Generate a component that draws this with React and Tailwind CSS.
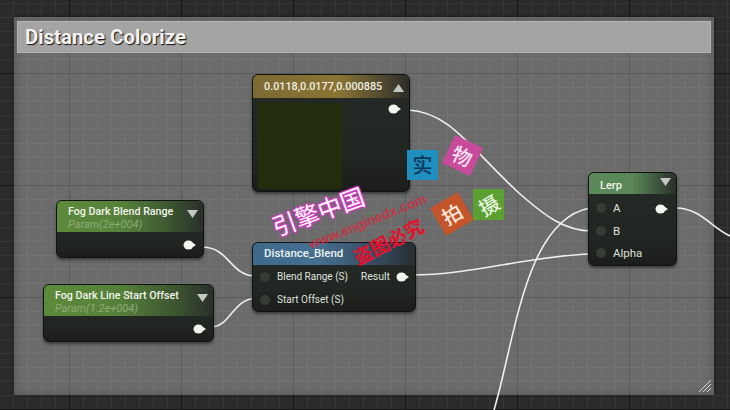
import React from 'react';

const Pin = ({ on }) => (
  <svg width="14" height="12" viewBox="0 0 14 12" className="shrink-0">
    {on ? (
      <>
        <ellipse cx="5.5" cy="6" rx="5" ry="4.5" fill="#f2f4ee" />
        <path d="M10 4 L13 6 L10 8 Z" fill="#f2f4ee" />
      </>
    ) : (
      <circle cx="6" cy="6" r="5" fill="#363b35" />
    )}
  </svg>
);

const Tri = ({ up }) => (
  <svg width="11" height="8" viewBox="0 0 11 8" className="shrink-0">
    <path d={up ? 'M5.5 0 L11 8 L0 8 Z' : 'M0 0 L11 0 L5.5 8 Z'} fill="#c4c8c2" />
  </svg>
);

const nodeBody =
  'absolute rounded-[6px] border border-[#101210] bg-[linear-gradient(180deg,#262a26,#222622_70%,#1b1d1b)] shadow-[0_2px_3px_rgba(0,0,0,0.45)] overflow-hidden';

const InputRow = ({ label, size }) => (
  <div className={`flex items-center gap-[4px] leading-[14px] text-[#dfe1db] ${size}`}>
    <Pin />
    <span>{label}</span>
  </div>
);

const ParamNode = ({ pos, title, sub }) => (
  <div className={`${nodeBody} ${pos}`}>
    <div className="flex h-[31px] items-start justify-between bg-[linear-gradient(90deg,#5d8a3a,#55803a_45%,#3a5230_80%,#2a2e2a)] pl-[11px] pr-[5px] pt-[4px]">
      <div>
        <div className="text-[10.7px] font-medium leading-[14px] text-[#f1f3ec]">{title}</div>
        <div className="text-[11px] italic leading-[12px] text-[#8fa878]">{sub}</div>
      </div>
      <div className="pt-[5px]"><Tri /></div>
    </div>
    <div className="flex justify-end pr-[6px] pt-[7px]"><Pin on /></div>
  </div>
);

const Wires = () => (
  <svg width="730" height="410" viewBox="0 0 730 410" fill="none" className="absolute left-0 top-0" stroke="#eef0ea" strokeWidth="1.6">
    <path d="M408 110 C 450 112, 470 148, 520 194 C 545 216, 565 231, 592 231" />
    <path d="M203 247 C 230 248, 230 276, 256 276" />
    <path d="M213 327 C 232 324, 232 300, 256 298" />
    <path d="M412 275 C 470 275, 530 256, 590 254" />
    <path d="M676 208 C 700 208, 712 228, 730 236" />
    <path d="M494 410 C 515 340, 525 220, 590 208" />
  </svg>
);

const Stamp = ({ pos, bg, text, label }) => (
  <div className={`absolute flex items-center justify-center font-['Noto_Sans_CJK_SC',sans-serif] text-[20px] font-medium ${pos} ${bg} ${text}`}>{label}</div>
);

export default function App() {
  return (
    <div
      className="relative h-[410px] w-[730px] overflow-hidden bg-[#2b2b2b] bg-[linear-gradient(#161616_1px,transparent_1px),linear-gradient(90deg,#161616_1px,transparent_1px),linear-gradient(#363636_1px,transparent_1px),linear-gradient(90deg,#363636_1px,transparent_1px)] bg-[size:112px_112px,112px_112px,14px_14px,14px_14px] bg-[position:0_73px,69px_0,0_3px,13px_0] font-['Roboto',sans-serif]"
    >
      {/* comment box */}
      <div className="absolute left-[14px] top-[17px] h-[378px] w-[700px] bg-white/30 shadow-[inset_0_0_10px_rgba(0,0,0,0.22),0_0_3px_rgba(0,0,0,0.5)]">
        <div className="mx-[3px] mt-[4px] flex h-[32px] items-center border border-[#b4b4b4] bg-[#a4a4a4] pl-[7px] text-[20.4px] font-bold text-[#f2f2f2] [text-shadow:1px_1px_1px_#111]">
          Distance Colorize
        </div>
        <svg width="14" height="14" viewBox="0 0 14 14" className="absolute bottom-[2px] right-[2px]" stroke="#d8d8d8" strokeWidth="1">
          <path d="M1 13 L13 1 M5 13 L13 5 M9 13 L13 9" />
        </svg>
      </div>

      <Wires />

      {/* constant node */}
      <div className={`${nodeBody} left-[252px] top-[74px] h-[118px] w-[158px]`}>
        <div className="flex h-[23px] items-center justify-between bg-[linear-gradient(90deg,#7d6a32,#8a7434_55%,#4c4630_85%,#2c2c28)] pl-[11px] pr-[5px] pt-[2px] text-[10.8px] font-medium text-[#f1f1e8]">
          <span>0.0118,0.0177,0.000885</span>
          <Tri up />
        </div>
        <div className="flex justify-between pl-[5px] pr-[7px] pt-[5px]">
          <div className="h-[86px] w-[84px] bg-[#242c0e]" />
          <Pin on />
        </div>
      </div>

      <ParamNode pos="left-[56px] top-[200px] h-[58px] w-[148px]" title="Fog Dark Blend Range" sub="Param(2e+004)" />
      <ParamNode pos="left-[43px] top-[284px] h-[58px] w-[171px]" title="Fog Dark Line Start Offset" sub="Param(1.2e+004)" />

      {/* function node */}
      <div className={`${nodeBody} left-[252px] top-[242px] h-[70px] w-[164px]`}>
        <div className="flex h-[22px] items-center bg-[linear-gradient(90deg,#3f6a8c,#456f90_40%,#34475a_80%,#2a2e30)] pl-[11px] text-[11.5px] font-medium text-[#eef2f4]">
          Distance_Blend
        </div>
        <div className="flex justify-between pl-[6px] pr-[5px] pt-[5px]">
          <div className="flex flex-col gap-[9px]">
            <InputRow label="Blend Range (S)" size="text-[10px]" />
            <InputRow label="Start Offset (S)" size="text-[10px]" />
          </div>
          <div className="flex h-[14px] items-center gap-[6px] text-[10.5px] text-[#dfe1db]">
            <span>Result</span>
            <Pin on />
          </div>
        </div>
      </div>

      {/* lerp node */}
      <div className={`${nodeBody} left-[588px] top-[172px] h-[94px] w-[89px]`}>
        <div className="flex h-[21px] items-start justify-between bg-[linear-gradient(90deg,#5d8a5c,#5a8658_50%,#384a38_85%,#2a2e2a)] pl-[11px] pr-[5px] pt-[5px] text-[11px] font-medium leading-[14px] text-[#f1f3ec]">
          <span className="mt-[1px]">Lerp</span>
          <Tri />
        </div>
        <div className="flex justify-between pl-[6px] pr-[7px] pt-[7px]">
          <div className="flex flex-col gap-[8.5px]">
            <InputRow label="A" size="text-[11.5px]" />
            <InputRow label="B" size="text-[11.5px]" />
            <InputRow label="Alpha" size="text-[11.5px]" />
          </div>
          <div className="pt-[2px]"><Pin on /></div>
        </div>
      </div>

      {/* watermark */}
      <div className="absolute left-[270px] top-[196px] -rotate-[20deg] whitespace-nowrap font-['Noto_Sans_CJK_SC',sans-serif] text-[24px] font-normal leading-[30px] text-white [text-shadow:0_0_2px_#d83cc8,1px_1px_1px_#d83cc8,-1px_-1px_1px_#d83cc8,1px_-1px_1px_#d83cc8,-1px_1px_1px_#d83cc8]">
        引擎中国
      </div>
      <div className="absolute left-[305px] top-[214px] -rotate-[22deg] whitespace-nowrap font-['Liberation_Sans',sans-serif] text-[13.5px] font-bold leading-[16px] text-[#d8283c]/80">
        www.enginedx.com
      </div>
      <div className="absolute left-[350px] top-[229px] -rotate-[27deg] whitespace-nowrap font-['Noto_Sans_CJK_SC',sans-serif] text-[19px] font-bold leading-[24px] text-[#e5102c]">
        盗图必究
      </div>
      <Stamp pos="left-[407px] top-[150px] h-[30px] w-[31px]" bg="bg-[#1f8fc0]" text="text-[#0e3a58]" label="实" />
      <Stamp pos="left-[447px] top-[140px] h-[31px] w-[31px] rotate-[25deg]" bg="bg-[#c84a9a]" text="text-[#f8e4f0]" label="物" />
      <Stamp pos="left-[436px] top-[198px] h-[32px] w-[32px] -rotate-[30deg]" bg="bg-[#c4552a]" text="text-[#fbe8dc]" label="拍" />
      <Stamp pos="left-[473px] top-[189px] h-[31px] w-[31px]" bg="bg-[#5aa032]" text="text-[#eaf6e0]" label={<span className="inline-block -rotate-[30deg]">摄</span>} />
    </div>
  );
}
